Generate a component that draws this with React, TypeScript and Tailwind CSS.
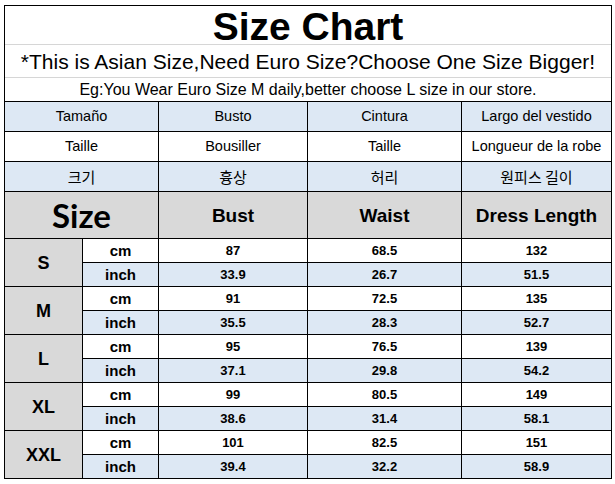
import { Fragment } from "react"

const rows = [
  { size: "S", cm: ["87", "68.5", "132"], inch: ["33.9", "26.7", "51.5"] },
  { size: "M", cm: ["91", "72.5", "135"], inch: ["35.5", "28.3", "52.7"] },
  { size: "L", cm: ["95", "76.5", "139"], inch: ["37.1", "29.8", "54.2"] },
  { size: "XL", cm: ["99", "80.5", "149"], inch: ["38.6", "31.4", "58.1"] },
  { size: "XXL", cm: ["101", "82.5", "151"], inch: ["39.4", "32.2", "58.9"] },
]

const langs = [
  { cls: "bg-[#dde8f4]", cells: ["Tamaño", "Busto", "Cintura", "Largo del vestido"] },
  { cls: "bg-white", cells: ["Taille", "Bousiller", "Taille", "Longueur de la robe"] },
  { cls: "bg-[#dde8f4]", cells: ["크기", "흉상", "허리", "원피스 길이"] },
]

export default function App() {
  return (
    <div className="w-[615px] h-[484px] bg-white pl-[4px] pt-[5px] font-['Liberation_Sans',Arial,sans-serif] text-black">
      <div className="w-[608px] border border-black">
        <div className="h-[39px] border-b border-[#d6d6d6] flex items-center justify-center text-[39px] font-bold leading-none pt-[2px]">
          Size Chart
        </div>
        <div className="h-[33px] border-b border-[#d6d6d6] flex items-center justify-center text-[21px] leading-none">
          *This is Asian Size,Need Euro Size?Choose One Size Bigger!
        </div>
        <div className="h-[24px] border-b border-black flex items-center justify-center text-[16px] leading-none">
          Eg:You Wear Euro Size M daily,better choose L size in our store.
        </div>
        <div className="grid grid-cols-[77px_75px_148px_153px_149px] grid-rows-[29px_29px_29px_46px_repeat(10,23px)] gap-px bg-black">
          {langs.map((l, i) =>
            l.cells.map((c, j) => (
              <div
                key={`${i}-${j}`}
                className={`${l.cls} ${j === 0 ? "col-span-2" : ""} flex items-center justify-center leading-none ${
                  i === 2 ? "font-['Noto_Sans_CJK_KR',sans-serif] text-[15px]" : "text-[14.5px]"
                }`}
              >
                {c}
              </div>
            ))
          )}
          <div className="col-span-2 bg-[#d9d9d9] flex items-center justify-center font-['Lato',sans-serif] font-bold text-[33px] leading-none">
            Size
          </div>
          {["Bust", "Waist", "Dress Length"].map((h) => (
            <div key={h} className="bg-[#d9d9d9] flex items-center justify-center font-bold text-[19px] leading-none">
              {h}
            </div>
          ))}
          {rows.map((r) => (
            <Fragment key={r.size}>
              <div className="row-span-2 bg-[#d9d9d9] flex items-center justify-center font-bold text-[18px] leading-none">
                {r.size}
              </div>
              <div className="bg-white flex items-center justify-center font-bold text-[15px] leading-none">cm</div>
              {r.cm.map((v, k) => (
                <div key={`c${k}`} className="bg-white flex items-center justify-center font-bold text-[13px] leading-none">
                  {v}
                </div>
              ))}
              <div className="bg-[#dde8f4] flex items-center justify-center font-bold text-[15px] leading-none">inch</div>
              {r.inch.map((v, k) => (
                <div key={`i${k}`} className="bg-[#dde8f4] flex items-center justify-center font-bold text-[13px] leading-none">
                  {v}
                </div>
              ))}
            </Fragment>
          ))}
        </div>
      </div>
    </div>
  )
}
